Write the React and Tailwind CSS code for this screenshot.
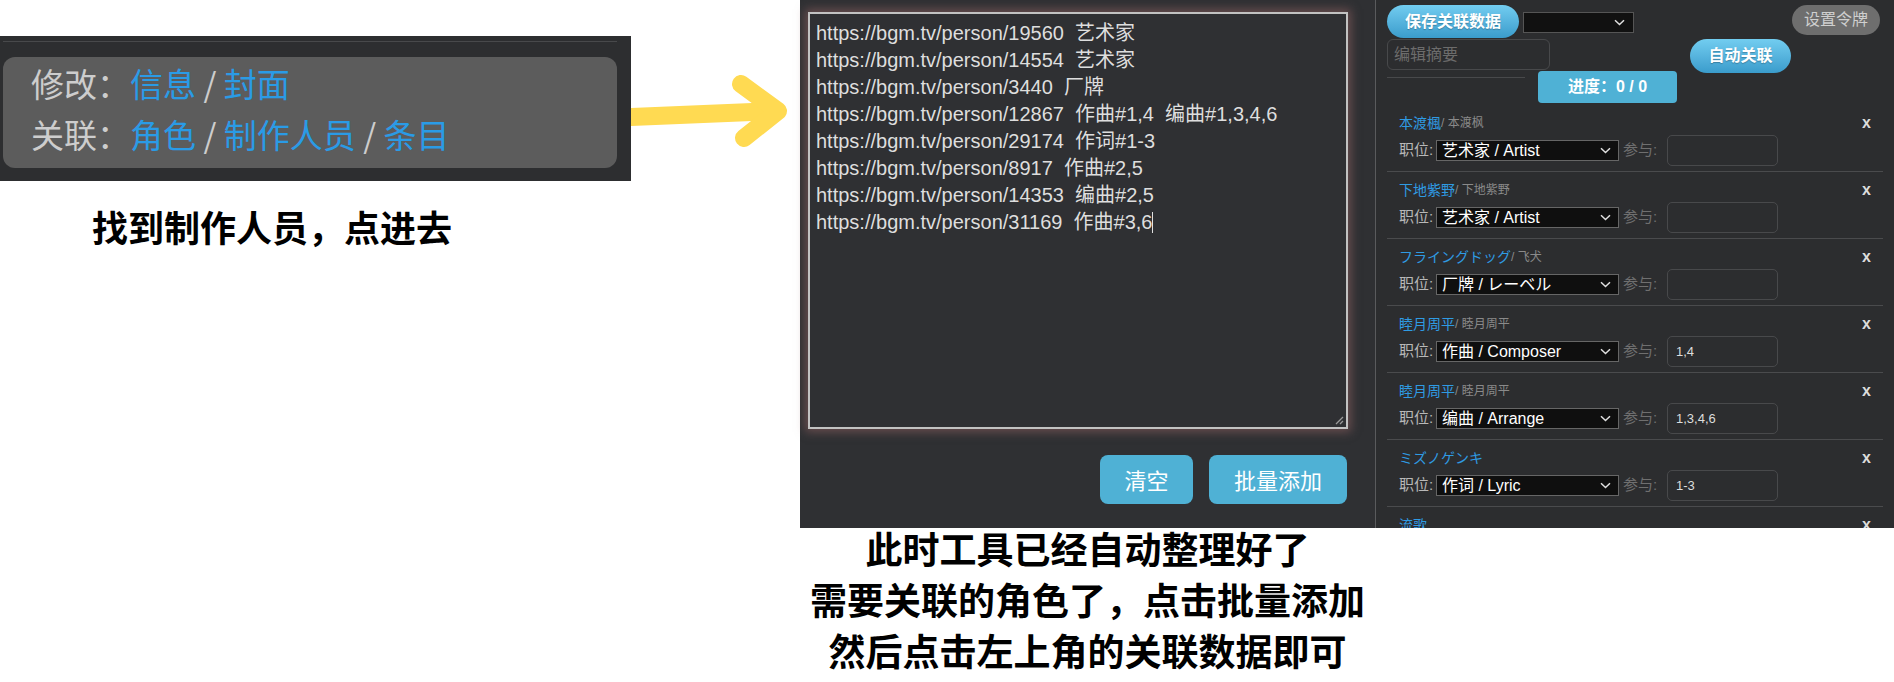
import React from "react";

const CJK = "font-['Noto_Sans_CJK_SC',sans-serif]";
const UI = "font-['Liberation_Sans','Noto_Sans_CJK_SC',sans-serif]";

const lines = [
  "https://bgm.tv/person/19560  艺术家",
  "https://bgm.tv/person/14554  艺术家",
  "https://bgm.tv/person/3440  厂牌",
  "https://bgm.tv/person/12867  作曲#1,4  编曲#1,3,4,6",
  "https://bgm.tv/person/29174  作词#1-3",
  "https://bgm.tv/person/8917  作曲#2,5",
  "https://bgm.tv/person/14353  编曲#2,5",
];

const items = [
  { name: "本渡楓", sub: "/ 本渡枫", role: "艺术家 / Artist", part: "" },
  { name: "下地紫野", sub: "/ 下地紫野", role: "艺术家 / Artist", part: "" },
  { name: "フライングドッグ", sub: "/ 飞犬", role: "厂牌 / レーベル", part: "" },
  { name: "睦月周平", sub: "/ 睦月周平", role: "作曲 / Composer", part: "1,4" },
  { name: "睦月周平", sub: "/ 睦月周平", role: "编曲 / Arrange", part: "1,3,4,6" },
  { name: "ミズノゲンキ", sub: "", role: "作词 / Lyric", part: "1-3" },
  { name: "流歌", sub: "", role: "", part: "" },
];

function Chevron() {
  return (
    <svg width="11" height="7" viewBox="0 0 11 7" className="shrink-0">
      <path d="M1 1.2 L5.5 5.5 L10 1.2" fill="none" stroke="#e0e0e0" strokeWidth="1.5" />
    </svg>
  );
}

function Item({ it }) {
  return (
    <div className="mx-[11px] h-[67px] border-b border-[#4a4b4d] px-[12px] pt-[8px]">
      <div className="flex items-center h-[20px] leading-[20px]">
        <span className="text-[14px] text-[#2f9be3]">{it.name}</span>
        <span className="text-[12px] text-[#8a8a8a]">{it.sub}</span>
        <span className="ml-auto text-[16px] font-bold text-[#dcdcdc]">x</span>
      </div>
      <div className="mt-[2px] flex items-center h-[31px]">
        <span className="w-[37px] text-[15px] text-[#b8b8b8]">职位:</span>
        <div className="w-[183px] h-[21px] bg-[#0f0f0f] border border-[#666] flex items-center pl-[5px] pr-[7px] text-white text-[16px] leading-[19px]">
          <span className="flex-1 whitespace-nowrap">{it.role}</span>
          <Chevron />
        </div>
        <span className="ml-[4px] w-[44px] text-[15px] text-[#6f6f6f]">参与:</span>
        <div className="w-[111px] h-[31px] rounded-[5px] border border-[#48494b] pl-[8px] text-[13px] text-[#dddddd] flex items-center">
          {it.part}
        </div>
      </div>
    </div>
  );
}

export default function App() {
  return (
    <div className="w-[1894px] h-[682px] bg-white flex items-start overflow-hidden">
      {/* left */}
      <div className={`w-[631px] shrink-0 pt-[36px] ${CJK}`}>
        <div className="h-[145px] bg-[#2d2e30] pt-[5px]">
          <div className="ml-[3px] w-[614px] h-px bg-[#48494b]" />
          <div className="mt-[15px] ml-[3px] w-[614px] h-[111px] rounded-[12px] bg-[#5c5c5c] pl-[28px] pt-[1px] text-[33px] leading-[51px] text-[#cdcdcd]">
            <div>
              修改：<span className="text-[#2a9be6]">信息</span> / <span className="text-[#2a9be6]">封面</span>
            </div>
            <div>
              关联：<span className="text-[#2a9be6]">角色</span> / <span className="text-[#2a9be6]">制作人员</span> / <span className="text-[#2a9be6]">条目</span>
            </div>
          </div>
        </div>
        <div className="mt-[25px] pl-[92px] text-[36px] leading-[40px] font-bold text-black">
          找到制作人员，点进去
        </div>
      </div>

      {/* arrow */}
      <div className="w-[169px] shrink-0">
        <svg width="169" height="160" viewBox="631 0 169 160">
          <path d="M631 117 L776 111" stroke="#ffda52" strokeWidth="18" strokeLinecap="round" fill="none" />
          <path d="M741 84 L778 111 L744 138" stroke="#ffda52" strokeWidth="18" strokeLinecap="round" strokeLinejoin="round" fill="none" />
        </svg>
      </div>

      {/* middle */}
      <div className="w-[575px] shrink-0 flex flex-col">
        <div className="h-[528px] bg-[#2f3033] pt-[12px] pl-[8px]">
          <div className={`relative w-[540px] h-[417px] border-2 border-[#c2c2c2] shadow-[0_0_9px_3px_rgba(150,100,100,0.55)] pl-[6px] pt-[6px] text-[20px] leading-[27px] text-[#dedede] whitespace-pre ${UI}`}>
            {lines.map((l, i) => (
              <div key={i}>{l}</div>
            ))}
            <div>
              https://bgm.tv/person/31169  作曲#3,6
              <span className="inline-block w-px h-[21px] bg-[#e0e0e0] align-[-4px]" />
            </div>
            <svg width="10" height="10" viewBox="0 0 10 10" className="absolute right-[2px] bottom-[2px]">
              <path d="M9 2 L2 9 M9 6 L6 9" stroke="#9a9a9a" strokeWidth="1.3" />
            </svg>
          </div>
          <div className={`mt-[26px] flex justify-end gap-[16px] pr-[28px] ${CJK}`}>
            <button className="w-[93px] h-[49px] rounded-[8px] bg-[#4fb1d5] text-white text-[22px]">清空</button>
            <button className="w-[138px] h-[49px] rounded-[8px] bg-[#4fb1d5] text-white text-[22px]">批量添加</button>
          </div>
        </div>
        <div className={`-mt-[5px] text-center text-[37px] leading-[51px] font-bold text-black ${CJK}`}>
          <div>此时工具已经自动整理好了</div>
          <div>需要关联的角色了，点击批量添加</div>
          <div>然后点击左上角的关联数据即可</div>
        </div>
      </div>

      {/* right */}
      <div className={`w-[519px] h-[528px] shrink-0 border-l border-[#5a5b5d] bg-[#2c2d2f] overflow-hidden ${UI}`}>
        <div className="flex items-start pl-[11px] pr-[14px] pt-[5px] h-[39px]">
          <button className="w-[132px] h-[33px] rounded-full bg-linear-to-b from-[#72cdf0] to-[#3a9ccc] text-white font-bold text-[16px] [text-shadow:0_1px_1px_rgba(0,0,0,0.25)]">
            保存关联数据
          </button>
          <div className="ml-[4px] mt-[7px] w-[111px] h-[21px] bg-[#111] border border-[#555] flex items-center justify-end pr-[8px]">
            <Chevron />
          </div>
          <button className="ml-auto w-[88px] h-[30px] rounded-full bg-[#6e6e6e] text-[#cfcfcf] text-[16px]">设置令牌</button>
        </div>
        <div className="flex items-start pl-[11px]">
          <div className="w-[163px] h-[31px] rounded-[6px] border border-[#48494b] pl-[6px] flex items-center text-[16px] text-[#6c6c6c]">
            编辑摘要
          </div>
          <button className="ml-[140px] w-[101px] h-[34px] rounded-full bg-linear-to-b from-[#72cdf0] to-[#3a9ccc] text-white font-bold text-[16px] [text-shadow:0_1px_1px_rgba(0,0,0,0.25)]">
            自动关联
          </button>
        </div>
        <div className="-mt-[2px] flex items-start pl-[11px]">
          <div className="mt-[6px] w-[138px] h-px bg-[#48494b]" />
          <div className="ml-[13px] w-[139px] h-[32px] rounded-[4px] bg-[#4fb1d5] text-white font-bold text-[16px] flex items-center justify-center">
            进度：0 / 0
          </div>
        </div>
        <div className="mt-[2px]">
          {items.map((it, i) => (
            <Item key={i} it={it} />
          ))}
        </div>
      </div>
    </div>
  );
}
